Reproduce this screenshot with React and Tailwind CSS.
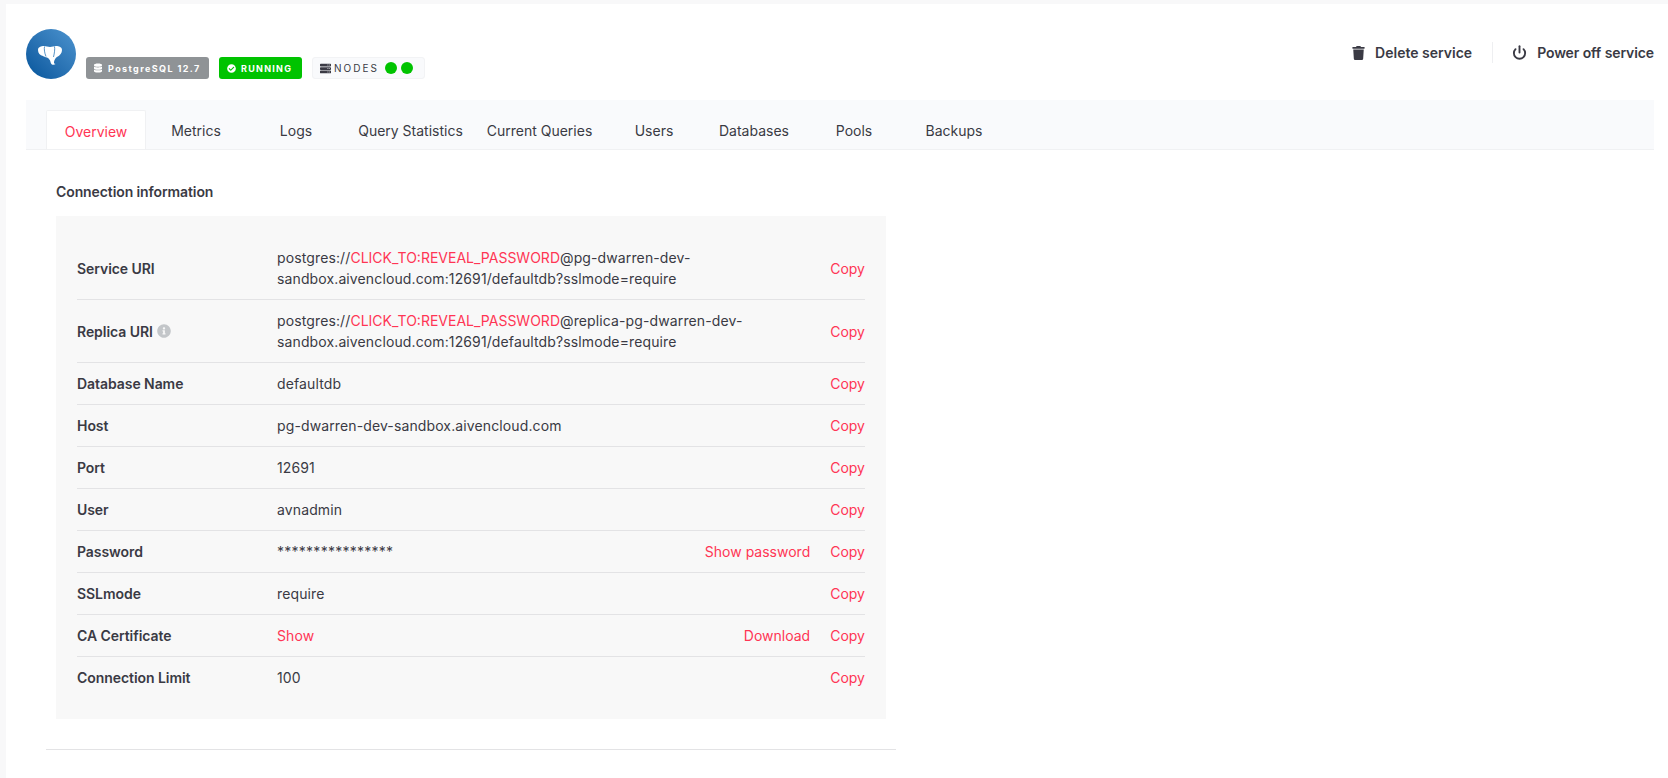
import React from 'react';
import { FaTrash, FaDatabase, FaCheckCircle, FaServer, FaInfoCircle } from 'react-icons/fa';
import { Power } from 'lucide-react';

const tabs = [
  ['Overview', 'w-[100px]'],
  ['Metrics', 'w-[100px]'],
  ['Logs', 'w-[100px]'],
  ['Query Statistics', 'w-[129px]'],
  ['Current Queries', 'w-[129px]'],
  ['Users', 'w-[100px]'],
  ['Databases', 'w-[100px]'],
  ['Pools', 'w-[100px]'],
  ['Backups', 'w-[100px]'],
];

const Link = ({ children }) => <span className="text-[#ff3554] cursor-pointer">{children}</span>;

const Uri = ({ host }) => (
  <>
    postgres://<span className="text-[#ff3554] tracking-normal">CLICK_TO:REVEAL_PASSWORD</span>@{host}-dev-
    <br />
    sandbox.aivencloud.com:12691/defaultdb?sslmode=require
  </>
);

const rows = [
  { label: 'Service URI', value: <Uri host="pg-dwarren" /> },
  { label: 'Replica URI', info: true, value: <Uri host="replica-pg-dwarren" /> },
  { label: 'Database Name', value: 'defaultdb' },
  { label: 'Host', value: 'pg-dwarren-dev-sandbox.aivencloud.com' },
  { label: 'Port', value: '12691' },
  { label: 'User', value: 'avnadmin' },
  { label: 'Password', value: <span className="tracking-[0.26px]">****************</span>, extra: 'Show password' },
  { label: 'SSLmode', value: 'require' },
  { label: 'CA Certificate', value: <Link>Show</Link>, extra: 'Download' },
  { label: 'Connection Limit', value: '100' },
];

const Elephant = () => (
  <svg viewBox="0 0 32 34" className="w-[32px] h-[34px]">
    <path
      fill="#fff"
      d="M3 13C3 10 6 9 9 9C11 9 13 10 15 10C17 10 19 9 21 9C24 9 27 10 27 13C27 16 25 18.500 22 20C20.500 21 19.500 22.500 19 25C18.800 26 19.500 27 20.500 27C19 28.500 16 28 15.500 25C15.200 23 14 21.500 12 20.500C10 20 9 19.500 8 19C5 18.500 3 16 3 13Z"
    />
    <path d="M9.500 9.500C9 12 9.500 16 11 19.500M19.500 9.500C20 12 19.500 16 18.500 20" fill="none" stroke="#2f78b6" strokeWidth="0.8" />
  </svg>
);

export default function App() {
  return (
    <div className="min-h-[778px] h-[778px] overflow-hidden bg-[#f8f8f9] pl-[6px] pt-[4px] font-['Inter','Liberation_Sans',sans-serif] text-[14px] leading-[21px] text-[#3a3a44]">
      <div className="h-full bg-white pl-[20px] pr-[14px] pt-[25px]">
        <div className="flex items-start justify-between h-[71px]">
          <div className="flex items-end gap-[10px]">
            <div className="w-[50px] h-[50px] rounded-full bg-gradient-to-tr from-[#00559b] to-[#4c94cf] flex items-center justify-center">
              <Elephant />
            </div>
            <div className="flex items-center w-[123px] h-[22px] pl-[8px] gap-[6px] rounded-[3px] bg-[#8f9396] text-white text-[9px] font-bold tracking-[1.4px]">
              <FaDatabase className="w-[8px] h-[10px]" />
              PostgreSQL 12.7
            </div>
            <div className="flex items-center w-[83px] h-[22px] pl-[8px] gap-[5px] rounded-[3px] bg-[#00c300] text-white text-[9px] font-bold tracking-[1.26px]">
              <FaCheckCircle className="w-[9px] h-[9px]" />
              RUNNING
            </div>
            <div className="flex items-center h-[22px] pl-[7px] w-[113px] rounded-[3px] bg-[#f9fafc] border border-[#f2f3f5] text-[#3a3a44] text-[10px] tracking-[0.2em]">
              <FaServer className="w-[11px] h-[11px] mr-[3px]" />
              NODES
              <span className="ml-[6px] w-[12px] h-[12px] rounded-full bg-[#00c300]" />
              <span className="ml-[4px] w-[12px] h-[12px] rounded-full bg-[#00c300]" />
            </div>
          </div>
          <div className="flex items-center mt-[13px] font-semibold">
            <div className="flex items-center gap-[10px] pr-[20px]">
              <FaTrash className="w-[13px] h-[14px]" />
              Delete service
            </div>
            <div className="flex items-center gap-[10px] pl-[19px] border-l border-[#eeeff1] h-[21px] tracking-[-0.1px]">
              <Power className="w-[15px] h-[15px]" strokeWidth={3} />
              Power off service
            </div>
          </div>
        </div>

        <div className="flex items-end h-[50px] pl-[20px] bg-[#f9fafc] border-b border-[#f0f1f3]">
          {tabs.map(([name, width], i) => (
            <div
              key={name}
              className={`${width} h-[39px] pt-[2px] flex items-center justify-center ${i === 0 ? 'bg-white border border-b-0 border-[#f0f1f3] rounded-t-[2px] text-[#ff3554]' : ''}`}
            >
              {name}
            </div>
          ))}
        </div>

        <div className="pl-[30px] w-[874px]">
          <h3 className="mt-[31px] mb-[14px] font-semibold tracking-[-0.1px]">Connection information</h3>
          <div className="w-[830px] bg-[#f8f8f8] pt-[21px] pb-[21px] px-[21px]">
            {rows.map((row, i) => (
              <div
                key={row.label}
                className={`flex items-center py-[10px] ${i < rows.length - 1 ? 'border-b border-[#e3e3e5]' : ''}`}
              >
                <div className="w-[200px] flex items-center gap-[4px] font-semibold tracking-[-0.06px]">
                  {row.label}
                  {row.info && <FaInfoCircle className="w-[14px] h-[14px] text-[#c3c6c9]" />}
                </div>
                <div className="flex-1 tracking-[0.12px]">{row.value}</div>
                {row.extra && <div className="mr-[20px]"><Link>{row.extra}</Link></div>}
                <Link>Copy</Link>
              </div>
            ))}
          </div>
          <div className="mt-[30px] -ml-[10px] w-[850px] border-t border-[#e3e3e5]" />
        </div>
      </div>
    </div>
  );
}
